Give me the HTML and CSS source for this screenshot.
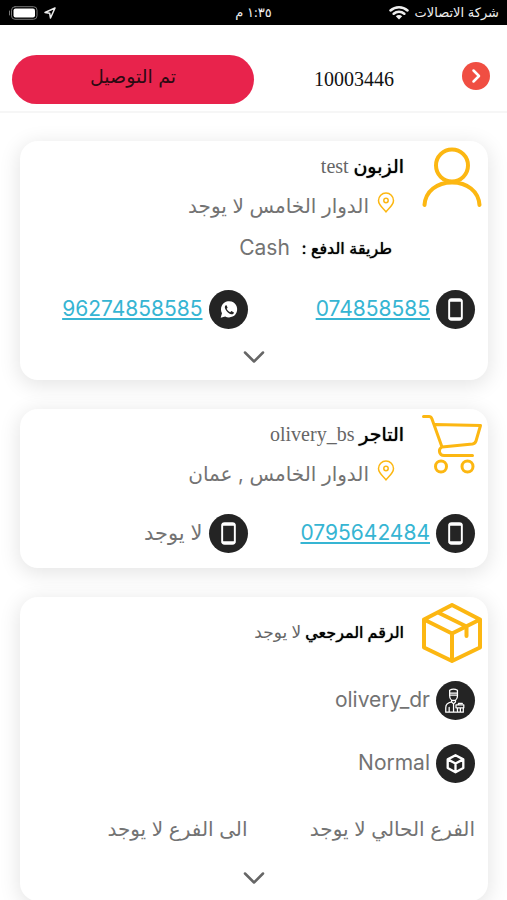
FILE: index.html
```html
<!DOCTYPE html>
<html lang="ar" dir="rtl">
<head>
<meta charset="utf-8">
<meta name="viewport" content="width=device-width, initial-scale=1">
<title>10003446</title>
<link rel="stylesheet" href="styles.css">
</head>
<body>
<svg class="sprite" aria-hidden="true">
  <symbol id="pin" viewBox="0 0 18 22"><path d="M9 20C8 17.500 1.500 14 1.500 8.600a7.500 7.500 0 0 1 15 0C16.500 14 10 17.500 9 20z"/><circle cx="9" cy="8.500" r="2.200"/></symbol>
  <symbol id="phone" viewBox="0 0 40 40"><rect x="13.500" y="9.500" width="13" height="21" rx="2.500"/><path d="M14 11h12M14 29h12"/></symbol>
  <symbol id="chevron" viewBox="0 0 22 12"><path d="M2 1.500l9 9 9-9"/></symbol>
</svg>

<div class="status">
  <div class="carrier"><span>شركة الاتصالات</span>
    <svg class="wifi" viewBox="0 0 20 15"><path d="M1.500 5.500a12.500 12.500 0 0 1 17 0M4.700 8.800a8 8 0 0 1 10.600 0"/><path class="solid" d="M10 14.500l-3.200-3.300a4.600 4.600 0 0 1 6.400 0z"/></svg>
  </div>
  <time>١:٣٥ م</time>
  <div class="power">
    <svg class="locate" viewBox="0 0 12 12"><path d="M11 1L1 5.500l4.700.8L6.500 11z"/></svg>
    <svg class="battery" viewBox="0 0 30 14"><rect class="shell" x="3.500" y=".7" width="25.500" height="12.600" rx="3.500"/><rect class="charge" x="5.500" y="2.500" width="21.500" height="9" rx="2"/><path class="cap" d="M1.500 5v4"/></svg>
  </div>
</div>

<header class="topbar">
  <button class="back" aria-label="رجوع"><svg viewBox="0 0 28 28"><path d="M11.500 8.500L17 14l-5.500 5.500"/></svg></button>
  <h1>10003446</h1>
  <button class="state">تم التوصيل</button>
</header>

<main>
  <section class="card">
    <div class="head">
      <svg class="emblem" viewBox="0 0 60 60"><circle cx="30" cy="18.500" r="16" stroke-width="4"/><path stroke-width="4" d="M2.500 58C3.500 44 15 35.500 30 35.500S56.500 44 57.500 58"/></svg>
      <div class="info">
        <h2>الزبون <span>test</span></h2>
        <p class="address"><svg class="pin"><use href="#pin"/></svg>الدوار الخامس لا يوجد</p>
        <p class="payment"><b>طريقة الدفع :</b><span>Cash</span></p>
      </div>
    </div>
    <div class="contacts">
      <div class="item"><svg class="badge"><use href="#phone"/></svg><a href="tel:074858585">074858585</a></div>
      <div class="item"><svg class="badge" viewBox="0 0 40 40"><path class="solid" d="M12 28.500l1.300-4.700a8.300 8.300 0 1 1 3.300 3.300z"/><path class="handset" d="M17.200 15.700c-1 .8-1.300 2.200-.5 3.700 1.200 2.500 3.300 4.500 5.900 5.400 1.500.4 2.700-.3 3-1.800l-2.600-1.500-1.300 1.300c-1.700-.7-2.900-1.900-3.600-3.500l1-1.200-1.100-2.500z"/></svg><a href="https://wa.me/96274858585">96274858585</a></div>
    </div>
    <button class="more" aria-label="المزيد"><svg><use href="#chevron"/></svg></button>
  </section>

  <section class="card">
    <div class="head">
      <svg class="emblem" viewBox="0 0 60 60"><path stroke-width="3" d="M1.500 1.500H7q2 0 2.800 2L20 32M13 9.500l45.500 1-4.500 15.500q-.8 2.600-3.500 3L20 32c-4 2-3.200 8.500 2 8.500h28.500"/><circle cx="19" cy="51.500" r="5.500" stroke-width="3"/><circle cx="45.500" cy="51.500" r="5.500" stroke-width="3"/></svg>
      <div class="info">
        <h2>التاجر <span>olivery_bs</span></h2>
        <p class="address"><svg class="pin"><use href="#pin"/></svg>الدوار الخامس , عمان</p>
      </div>
    </div>
    <div class="contacts">
      <div class="item"><svg class="badge"><use href="#phone"/></svg><a href="tel:0795642484">0795642484</a></div>
      <div class="item"><svg class="badge"><use href="#phone"/></svg><span>لا يوجد</span></div>
    </div>
  </section>

  <section class="card">
    <div class="head parcel">
      <svg class="emblem" viewBox="0 0 60 60"><path stroke-width="4" d="M30 2l28 14.500v28L30 58 2 44.500v-28zM2 16.500L30 30.500 58 16.500M30 30.500V58M16 9.500l28.500 14V33"/></svg>
      <div class="info">
        <h2 class="compact">الرقم المرجعي <span>لا يوجد</span></h2>
      </div>
    </div>
    <div class="details">
      <div class="item"><svg class="badge" viewBox="0 0 40 40"><g class="fine"><path d="M14 9.500q4-2.500 8 0v3h-8zM14 12.500v2.500c0 2.800 1.800 5 4 5s4-2.200 4-5v-2.500M14 14.500h8M16 19.500v2l2 2 2-2v-2M16 21.500c-4 .8-6 2.500-6 6V32h11M13.500 27v5M18 23.500V32"/><path d="M20.500 24.500h8v3h-8zM22 27.500h6V32h-6zM25 27.500V32M23 24.500v-1.500h4"/></g></svg><span>olivery_dr</span></div>
      <div class="item"><svg class="badge" viewBox="0 0 40 40"><path class="cube" d="M20 11.500l8 4.300v8.800L20 29l-8-4.400v-8.800zM12.500 16L20 20l7.500-4M20 20v8.500"/></svg><span>Normal</span></div>
    </div>
    <div class="branches"><span>الفرع الحالي لا يوجد</span><span>الى الفرع لا يوجد</span></div>
    <button class="more" aria-label="المزيد"><svg><use href="#chevron"/></svg></button>
  </section>
</main>
</body>
</html>
```
FILE: styles.css
```css
* { box-sizing: border-box; }

body {
  margin: 0;
  background: #fff;
  color: #737373;
  font: 21px/40px Inter, "DejaVu Sans", sans-serif;
}

h1, h2, p { margin: 0; font-weight: 400; }
button { border: 0; padding: 0; font: inherit; cursor: pointer; }
svg { display: block; flex: none; fill: none; stroke: currentColor; stroke-linecap: round; stroke-linejoin: round; }
.sprite { position: absolute; width: 0; height: 0; }
.solid { fill: currentColor; stroke: none; }

.status {
  display: grid;
  grid-template-columns: 1fr auto 1fr;
  align-items: center;
  height: 25px;
  padding: 0 8px;
  background: #000;
  color: #eee;
  font-size: 13px;
  line-height: 25px;
}
.carrier, .power { display: flex; align-items: center; gap: 6px; }
.power { justify-content: flex-end; }
.wifi { width: 20px; height: 15px; stroke-width: 2.500; }
.locate { width: 12px; height: 12px; stroke-width: 1.500; }
.battery { width: 30px; height: 14px; }
.shell { stroke: #777; }
.charge { fill: #fff; stroke: none; }
.cap { stroke: #777; }

.topbar {
  display: grid;
  grid-template-columns: 28px 1fr minmax(0, 242px);
  align-items: center;
  height: 88px;
  padding: 22px 17px 0 12px;
  border-bottom: 2px solid #f6f6f6;
  color: #111;
}
.back { width: 28px; height: 28px; margin-bottom: 6px; border-radius: 50%; background: #f04e42; color: #fff; }
.back svg { width: 28px; height: 28px; stroke-width: 2.500; }
.topbar h1 { padding-right: 68px; font: 20px/30px "Liberation Serif", serif; }
.state { height: 49px; padding-bottom: 4px; border-radius: 25px; background: #e8234c; color: #2c0a12; font-size: 19px; }

main { display: grid; gap: 29px; padding: 28px 19px 0 20px; }

.card { border-radius: 18px; background: #fff; box-shadow: 0 4px 20px 2px rgba(0, 0, 0, .1); }
.head { display: flex; gap: 18px; padding: 6px 6px 0 0; }
.emblem { width: 60px; height: 60px; color: #fcb712; }
.info h2 { color: #000; font: 19px/38px "Liberation Serif", "DejaVu Sans", serif; text-shadow: 0 0 1px #000; }
.info h2 span { color: #666; font-size: 20px; text-shadow: none; }
.info .compact { font-size: 16px; }
.info .compact span { font-size: 17px; }
.address { display: flex; align-items: center; gap: 8px; padding-right: 9px; font-size: 20px; }
.pin { width: 18px; height: 22px; margin-bottom: 6px; color: #fcb712; stroke-width: 1.500; }
.payment { display: flex; gap: 12px; padding-right: 12px; line-height: 44px; }
.payment b { color: #000; font-size: 16px; font-weight: 400; text-shadow: 0 0 1px #000; }

.contacts, .branches { display: grid; grid-template-columns: 1fr 1fr; padding-right: 13px; }
.contacts { padding-top: 19px; padding-bottom: 15px; }
.item { display: flex; align-items: center; gap: 6px; }
.item a { color: #36b5d3; text-decoration-thickness: 2px; text-underline-offset: 2px; }
.badge { width: 39px; height: 39px; border-radius: 50%; background: #242424; color: #fff; stroke-width: 2; }
.handset { fill: #242424; stroke: none; }
.fine { stroke-width: 1.300; }
.cube { stroke-width: 2.400; }

.more { display: grid; place-items: center; width: 100%; height: 36px; padding-bottom: 10px; background: none; color: #666; }
.more svg { width: 22px; height: 12px; stroke-width: 2.500; }

.parcel { align-items: center; }
.details { display: grid; gap: 23px; padding: 17px 13px 26px 0; }
.branches { padding-bottom: 16px; font-size: 20px; }
```
